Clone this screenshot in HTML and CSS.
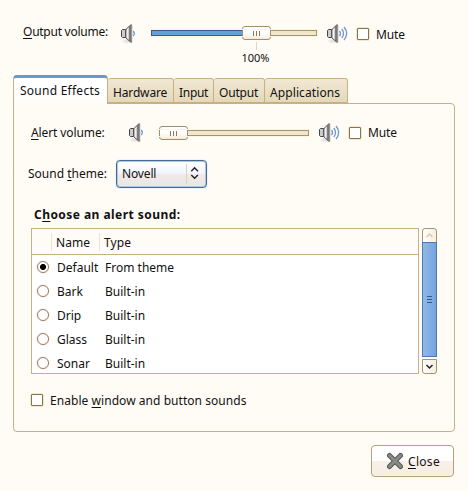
FILE: index.html
```html
<!DOCTYPE html>
<html lang="en">
<head>
<meta charset="utf-8">
<title>Sound Preferences</title>
<link rel="stylesheet" href="styles.css">
</head>
<body>
<svg class="defs" width="0" height="0">
  <defs>
    <linearGradient id="metal"><stop offset="0" stop-color="#777"/><stop offset=".45" stop-color="#f4f4f4"/><stop offset="1" stop-color="#999"/></linearGradient>
    <radialGradient id="shade"><stop offset="0" stop-color="#a99" stop-opacity=".35"/><stop offset="1" stop-color="#a99" stop-opacity="0"/></radialGradient>
    <g id="speaker">
      <ellipse cx="6" cy="17" rx="6" ry="3" fill="url(#shade)"/>
      <path d="M.5 6.500 1.500 5.500H4.500v8H1.500L.5 12.500z" fill="#ccc" stroke="#454545"/>
      <path d="M4.500 6 9 1.500v16L4.500 13.500z" fill="url(#metal)" stroke="#555"/>
      <path d="M9.500.8h1.200v17.500H9.500z" fill="#ddd" stroke="#666" stroke-width=".8"/>
    </g>
  </defs>
</svg>
<main class="window">
  <section class="volume output">
    <span class="label"><u>O</u>utput volume:</span>
    <svg class="speaker" viewBox="0 0 22 20"><use href="#speaker"/><path class="wave" d="M12.300 7q2 2.500 0 5"/></svg>
    <div class="slider filled"><i class="thumb"><b></b><b></b><b></b></i></div>
    <svg class="speaker loud" viewBox="0 0 22 20"><use href="#speaker"/><path class="wave" d="M12.500 7q2 2.500 0 5M14.800 5q3.400 4.500 0 9M17 3q5.300 6.500 0 13"/></svg>
    <i class="check"></i><span class="mute">Mute</span>
  </section>
  <div class="mark"><i></i><span>100%</span></div>
  <nav class="tabs">
    <span class="tab active">Sound Effects</span><span class="tab hardware">Hardware</span><span class="tab input">Input</span><span class="tab out">Output</span><span class="tab apps">Applications</span>
  </nav>
  <section class="panel">
    <div class="volume alert">
      <span class="label"><u>A</u>lert volume:</span>
      <svg class="speaker" viewBox="0 0 22 20"><use href="#speaker"/><path class="wave" d="M12.300 7q2 2.500 0 5"/></svg>
      <div class="slider"><i class="thumb"><b></b><b></b><b></b></i></div>
      <svg class="speaker loud" viewBox="0 0 22 20"><use href="#speaker"/><path class="wave" d="M12.500 7q2 2.500 0 5M14.800 5q3.400 4.500 0 9M17 3q5.300 6.500 0 13"/></svg>
      <i class="check"></i><span class="mute">Mute</span>
    </div>
    <div class="theme">
      <span class="theme-label">Sound <u>t</u>heme:</span>
      <div class="combo"><span>Novell</span><svg width="20" height="20" viewBox="0 0 20 20"><path d="M4.500 7 8 3.500 11.500 7M4.500 11 8 14.500 11.500 11"/></svg></div>
    </div>
    <h2>C<u>h</u>oose an alert sound:</h2>
    <div class="sounds">
      <div class="list">
        <div class="head"><span></span><span>Name</span><span>Type</span></div>
        <div class="row"><i class="radio on"></i><span>Default</span><span>From theme</span></div>
        <div class="row"><i class="radio"></i><span>Bark</span><span>Built-in</span></div>
        <div class="row"><i class="radio"></i><span>Drip</span><span>Built-in</span></div>
        <div class="row"><i class="radio"></i><span>Glass</span><span>Built-in</span></div>
        <div class="row"><i class="radio"></i><span>Sonar</span><span>Built-in</span></div>
      </div>
      <div class="scroll">
        <svg class="step up" viewBox="0 0 13 13"><path d="M3.500 8 6.500 5 9.500 8"/></svg>
        <div class="bar"><b></b><b></b><b></b></div>
        <svg class="step down" viewBox="0 0 13 13"><path d="M3.500 5 6.500 8 9.500 5"/></svg>
      </div>
    </div>
    <div class="enable"><i class="check"></i><span>Enable <u>w</u>indow and button sounds</span></div>
  </section>
  <footer>
    <div class="close"><svg width="18" height="18" viewBox="0 0 18 18"><path d="M3.500 3.500l11 11m0-11l-11 11" stroke="#555753" stroke-width="5" stroke-linecap="round"/><path d="M3.500 3.500l11 11m0-11l-11 11" stroke="#888a85" stroke-width="3" stroke-linecap="round"/></svg><span><u>C</u>lose</span></div>
  </footer>
</main>
</body>
</html>
```
FILE: styles.css
```css
* { box-sizing: border-box; }
body { margin: 0; background: #fffcf6; color: #111; font: 12px/16px "Noto Sans", "Open Sans", sans-serif; }
.defs { display: block; }
.window { width: 468px; height: 491px; padding: 23px 13px 0; overflow: hidden; white-space: nowrap; }
u { text-decoration-thickness: 1px; text-underline-offset: 2px; }
.volume { display: flex; height: 20px; }
.label { width: 98px; margin-top: 1px; padding-left: 10px; letter-spacing: -.25px; }
.speaker { width: 22px; height: 20px; flex: none; margin: 1px 0 0 10px; }
.wave { fill: none; stroke: #6d98d0; stroke-width: 1.3; }
.slider { display: flex; align-items: center; flex: none; width: 166px; height: 6px; margin: 7px 0 0 8px; background: #f1e6cf; border: 1px solid #a8946a; outline: 1px solid #fdf5e0; }
.filled { background: linear-gradient(90deg, #649fd6 0 91px, #f1e8cb 91px); border-image: linear-gradient(90deg, #355f91 0 92px, #a8946a 92px) 1; }
.thumb { display: flex; justify-content: center; align-items: center; gap: 2px; flex: none; width: 29px; height: 14px; margin-left: -1px; border: 1px solid #a18e70; border-radius: 3px; background: linear-gradient(#fff 50%, #f2eadc); }
.filled .thumb { margin-left: 90px; }
.thumb b { width: 1px; height: 5px; background: #8d7a58; }
.loud { margin-left: 10px; }
.check { flex: none; width: 12px; height: 12px; border: 1px solid #8c7446; border-radius: 1px; background: #fff; box-shadow: 0 0 0 .5px #dfd2b4; }
.volume .check { margin: 5px 0 0 8px; }
.mute { margin: 4px 0 0 7px; letter-spacing: -.1px; }
.mark { display: flex; flex-direction: column; align-items: center; width: 30px; margin: -1px 0 0 228px; height: 33px; font-size: 11px; }
.mark i { width: 1px; height: 8px; background: #e4d6b4; }
.mark span { margin-left: -1px; }
.tabs { display: flex; align-items: flex-end; height: 28px; position: relative; z-index: 1; }
.tab { height: 25px; border: 1px solid #c7b183; border-left-width: 0; border-radius: 3px 3px 0 0; background: linear-gradient(#f1e8d4, #e5d8b9); padding: 6px 0 0 5px; }
.active { width: 95px; height: 29px; margin-bottom: -1px; padding: 5px 0 0 6px; border: 1px solid #c7b183; border-top: 3px solid #6699d1; border-bottom: 0; border-radius: 4px 4px 0 0; background: linear-gradient(#fff 50%, #fffcf6); letter-spacing: .25px; }
.hardware { width: 66px; letter-spacing: -.15px; }
.input { width: 40px; letter-spacing: -.3px; }
.out { width: 51px; letter-spacing: -.2px; }
.apps { width: 83px; letter-spacing: .1px; }
.panel { width: 442px; height: 329px; border: 1px solid #c7b183; border-radius: 0 4px 4px; padding: 20px 17px 0; }
.alert { margin-left: -17px; height: 36px; }
.alert .label { width: 105px; padding-left: 17px; letter-spacing: -.1px; }
.alert .slider { width: 150px; margin-top: 6px; }
.alert .check { margin: 3px 0 0 8px; }
.alert .mute { margin: 1px 0 0 7px; }
.alert .speaker { margin-top: -1px; margin-left: 10px; }
.theme { display: flex; align-items: center; height: 28px; }
.theme-label { width: 85px; margin-left: -3px; }
.combo { display: flex; align-items: center; width: 91px; height: 28px; margin-left: 3px; padding-left: 5px; border: 1px solid #416c98; border-radius: 4px; box-shadow: inset 0 0 0 1px #b2c6de, 0 0 1px #86abd0; background: linear-gradient(#fff, #f0f4fd 50%, #f2e9e7 52%, #e7e7e4); }
.combo span { width: 64px; letter-spacing: -.15px; }
.combo svg { border-left: 1px solid #e1d3b1; }
.combo path, .step path { fill: none; stroke: #222; stroke-width: 1.500px; }
h2 { margin: 19px 0 0 3px; height: 21px; font: bold 12px/16px "Noto Sans", "Open Sans", sans-serif; letter-spacing: .45px; }
.sounds { display: flex; gap: 3px; height: 146px; }
.list { width: 388px; border: 1px solid #c7b183; background: #fff; overflow: hidden; }
.head { display: grid; grid-template-columns: 19px 48px 1fr; height: 26px; padding-top: 4px; background: #fffbf6; border-bottom: 1px solid #c7b183; }
.head span { height: 18px; padding: 2px 0 0 4px; letter-spacing: .1px; }
.head span + span { border-left: 1px solid #eee3cb; }
.head span:first-child { padding: 0; }
.row { display: grid; grid-template-columns: 25px 48px 1fr; align-items: center; height: 24px; }
.row span { padding-top: 2px; }
.radio { width: 12px; height: 12px; margin-left: 5px; border: 1px solid #9b7b55; border-radius: 50%; box-shadow: 0 0 1px #c99bbb; }
.on { background: radial-gradient(circle, #000 0 2.700px, #fff 3.300px); }
.scroll { display: flex; flex-direction: column; width: 15px; }
.step { flex: none; width: 15px; height: 15px; border: 1px solid #a8946a; background: linear-gradient(90deg, #fff, #f5eee2); }
.up { border-radius: 3px 3px 0 0; }
.up path { stroke: #dcc9a5; }
.down { border-radius: 0 0 3px 3px; margin-top: 2px; }
.bar { display: flex; flex-direction: column; gap: 2px; align-items: center; justify-content: center; height: 115px; border: 1px solid #487bb5; background: linear-gradient(90deg, #91b9e8, #74a3db); margin-top: -1px; }
.bar b { width: 5px; height: 1px; background: #365b87; }
.enable { display: flex; align-items: center; height: 16px; margin-top: 18px; gap: 7px; letter-spacing: .05px; }
.enable span { padding-top: 2px; }
footer { display: flex; justify-content: flex-end; padding: 13px 1px 0 0; }
.close { display: flex; align-items: center; gap: 4px; width: 83px; height: 32px; padding-left: 14px; border: 1px solid #b7a07a; border-radius: 4px; background: linear-gradient(#fff 49%, #f9f0e9 51%, #f5eee1); }
.close span { padding-top: 2px; letter-spacing: .3px; }
```
